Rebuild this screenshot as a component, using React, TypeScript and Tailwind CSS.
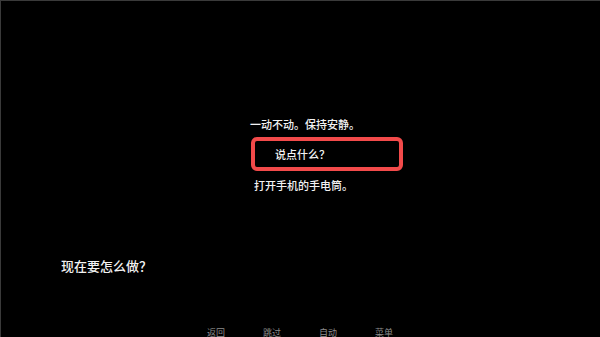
export default function App() {
  const font = { fontFamily: '"Noto Sans CJK SC", "Noto Sans", sans-serif' };
  return (
    <div
      className="w-[600px] h-[337px] bg-black overflow-hidden border-t border-l border-[#3a3a3a] flex flex-col text-[#f2f2f2]"
      style={font}
    >
      <div className="pt-[115px] pl-[248px] flex flex-col items-start">
        <div className="h-[16px] leading-[16px] text-[11px] ml-[1px] font-medium">一动不动。保持安静。</div>
        <div className="mt-[5px] ml-[2px] w-[152px] h-[34px] border-[4px] border-[#f24a4a] rounded-[6px] flex items-center pl-[20px]">
          <span className="text-[11px] leading-[16px] font-medium">说点什么？</span>
        </div>
        <div className="mt-[6px] ml-[5px] h-[16px] leading-[16px] text-[11px] font-medium">打开手机的手电筒。</div>
      </div>
      <div className="mt-[64px] pl-[60px] h-[18px] leading-[18px] text-[13px] font-medium">现在要怎么做？</div>
      <div className="mt-[52px] pl-[206px] flex gap-[38px] h-[12px] leading-[12px] text-[9px] text-[#8c8c8c]">
        <span>返回</span>
        <span>跳过</span>
        <span>自动</span>
        <span>菜单</span>
      </div>
    </div>
  );
}
